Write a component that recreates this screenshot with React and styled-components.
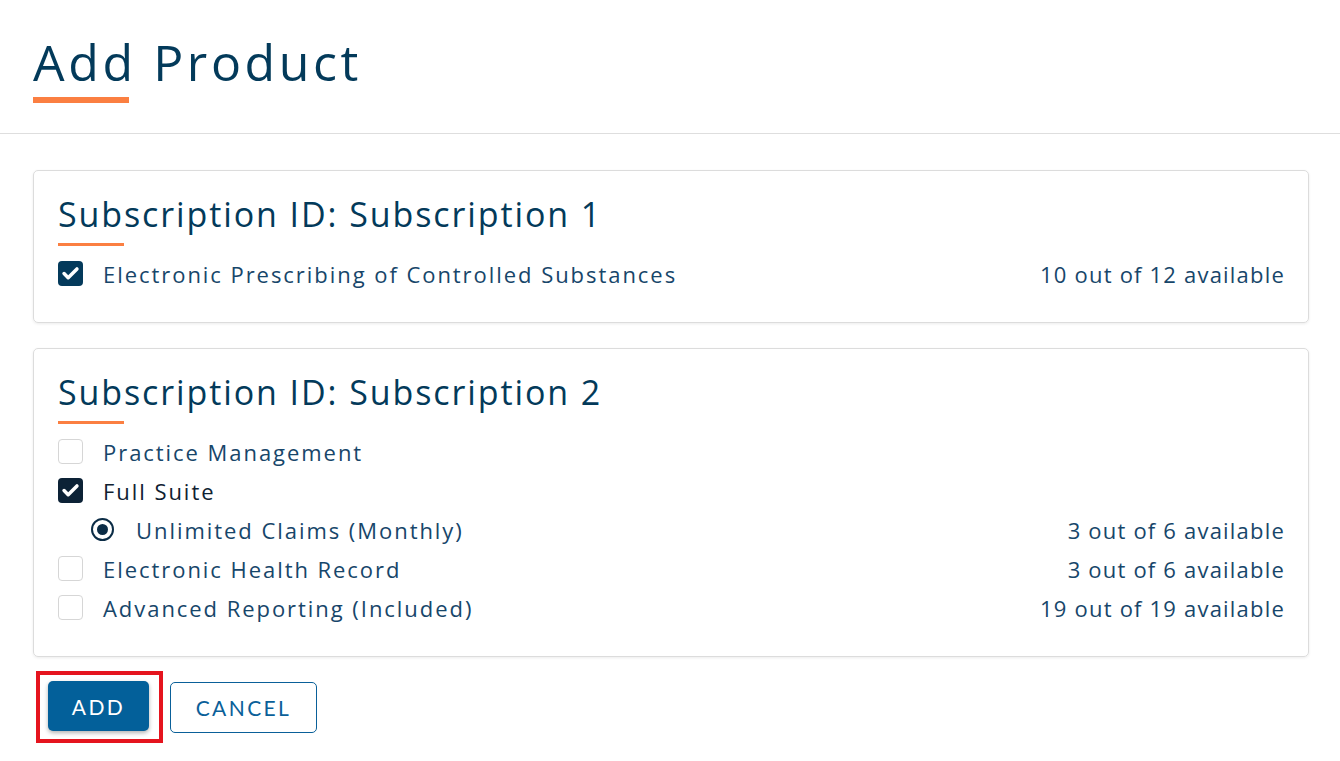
import React from 'react'
import styled, { createGlobalStyle } from 'styled-components'

const GlobalStyle = createGlobalStyle`
  body {
    margin: 0;
    background: #ffffff;
    font-family: "Open Sans", "Liberation Sans", sans-serif;
  }
`

const subscriptions = [
  {
    id: 'Subscription 1',
    items: [
      { name: 'Electronic Prescribing of Controlled Substances', kind: 'check', checked: true, available: '10 out of 12 available' },
    ],
  },
  {
    id: 'Subscription 2',
    items: [
      { name: 'Practice Management', kind: 'check', checked: false },
      { name: 'Full Suite', kind: 'check', checked: true, dark: true },
      { name: 'Unlimited Claims (Monthly)', kind: 'radio', checked: true, available: '3 out of 6 available' },
      { name: 'Electronic Health Record', kind: 'check', checked: false, available: '3 out of 6 available' },
      { name: 'Advanced Reporting (Included)', kind: 'check', checked: false, available: '19 out of 19 available' },
    ],
  },
]

const CheckIcon = () => (
  <svg width="25" height="25" viewBox="0 0 25 25">
    <path d="M5.5 12.5 L10 17 L19.5 7.5" fill="none" stroke="#fff" strokeWidth="3.8" strokeLinecap="round" strokeLinejoin="round" />
  </svg>
)

const App = () => (
  <Page>
    <GlobalStyle />
    <Header>
      <Title>Add Product</Title>
      <Accent $width={96} $height={6} />
    </Header>
    <Body>
      {subscriptions.map((sub) => (
        <Card key={sub.id}>
          <CardTitle>Subscription ID: {sub.id}</CardTitle>
          <Accent $width={66} $height={3} />
          <List>
            {sub.items.map((item) => (
              <Row key={item.name} $nested={item.kind === 'radio'}>
                <Option>
                  {item.kind === 'radio' ? (
                    <Radio><Dot /></Radio>
                  ) : (
                    <Box $checked={item.checked} $dark={item.dark}>
                      {item.checked && <CheckIcon />}
                    </Box>
                  )}
                  <Label $dark={item.dark}>{item.name}</Label>
                </Option>
                {item.available && <Available>{item.available}</Available>}
              </Row>
            ))}
          </List>
        </Card>
      ))}
      <Actions>
        <Highlight>
          <PrimaryButton>ADD</PrimaryButton>
        </Highlight>
        <OutlineButton>CANCEL</OutlineButton>
      </Actions>
    </Body>
  </Page>
)

const Page = styled.div`
  width: 1340px;
  min-height: 761px;
  background: #fff;
`
const Header = styled.div`
  padding: 30px 33px 30px;
  border-bottom: 1px solid #dedede;
`
const Title = styled.h1`
  margin: 0;
  font-size: 50px;
  line-height: 64px;
  font-weight: 400;
  letter-spacing: 3.6px;
  color: #033a5a;
`
const Accent = styled.div`
  width: ${(p) => p.$width}px;
  height: ${(p) => p.$height}px;
  background: #fb7f41;
  margin-top: ${(p) => (p.$height > 4 ? 3 : 8)}px;
`
const Body = styled.div`
  padding: 36px 31px 0 33px;
  display: flex;
  flex-direction: column;
  gap: 25px;
`
const Card = styled.div`
  border: 1px solid #dcdcdc;
  border-radius: 5px;
  box-shadow: 0 1px 3px rgba(0, 0, 0, 0.08);
  padding: 22px 24px 29px;
`
const CardTitle = styled.h2`
  margin: 0;
  font-size: 34px;
  line-height: 42px;
  font-weight: 400;
  letter-spacing: 1.9px;
  color: #033a5a;
`
const List = styled.div`
  margin-top: 8px;
  display: flex;
  flex-direction: column;
`
const Row = styled.div`
  height: 39px;
  display: flex;
  align-items: center;
  justify-content: space-between;
  padding-left: ${(p) => (p.$nested ? 33 : 0)}px;
`
const Option = styled.div`
  display: flex;
  align-items: center;
`
const Box = styled.div`
  width: 25px;
  height: 25px;
  box-sizing: border-box;
  border-radius: 4px;
  display: flex;
  align-items: center;
  justify-content: center;
  background: ${(p) => (p.$checked ? (p.$dark ? '#0c2236' : '#043a5b') : '#fff')};
  border: 1px solid ${(p) => (p.$checked ? 'transparent' : '#d6d6d6')};
  margin-right: 20px;
`
const Radio = styled.div`
  width: 23px;
  height: 23px;
  box-sizing: border-box;
  border-radius: 50%;
  border: 2px solid #0b2c46;
  display: flex;
  align-items: center;
  justify-content: center;
  margin-right: 22px;
`
const Dot = styled.div`
  width: 11px;
  height: 11px;
  border-radius: 50%;
  background: #0b2c46;
`
const Label = styled.span`
  font-size: 22px;
  letter-spacing: 1.95px;
  color: ${(p) => (p.$dark ? '#0f2131' : '#17466a')};
`
const Available = styled.span`
  font-size: 22px;
  letter-spacing: 1.2px;
  margin-right: -1px;
  color: #17466a;
`
const Actions = styled.div`
  display: flex;
  align-items: center;
  gap: 7px;
  margin-top: -11px;
  margin-left: 3px;
`
const Highlight = styled.div`
  border: 4px solid #e5141e;
  padding: 6px 10px 8px 8px;
`
const PrimaryButton = styled.button`
  width: 101px;
  height: 50px;
  padding: 0;
  border: none;
  border-radius: 5px;
  background: #03609a;
  color: #fff;
  font-family: Lato, "Open Sans", sans-serif;
  font-size: 21px;
  letter-spacing: 2.4px;
  box-shadow: 0 2px 4px rgba(0, 0, 0, 0.3);
`
const OutlineButton = styled.button`
  width: 147px;
  height: 51px;
  padding: 0;
  border: 1px solid #0a6099;
  border-radius: 5px;
  background: #fff;
  color: #0a6099;
  font-family: Lato, "Open Sans", sans-serif;
  font-size: 21px;
  letter-spacing: 2.4px;
`

export default App
